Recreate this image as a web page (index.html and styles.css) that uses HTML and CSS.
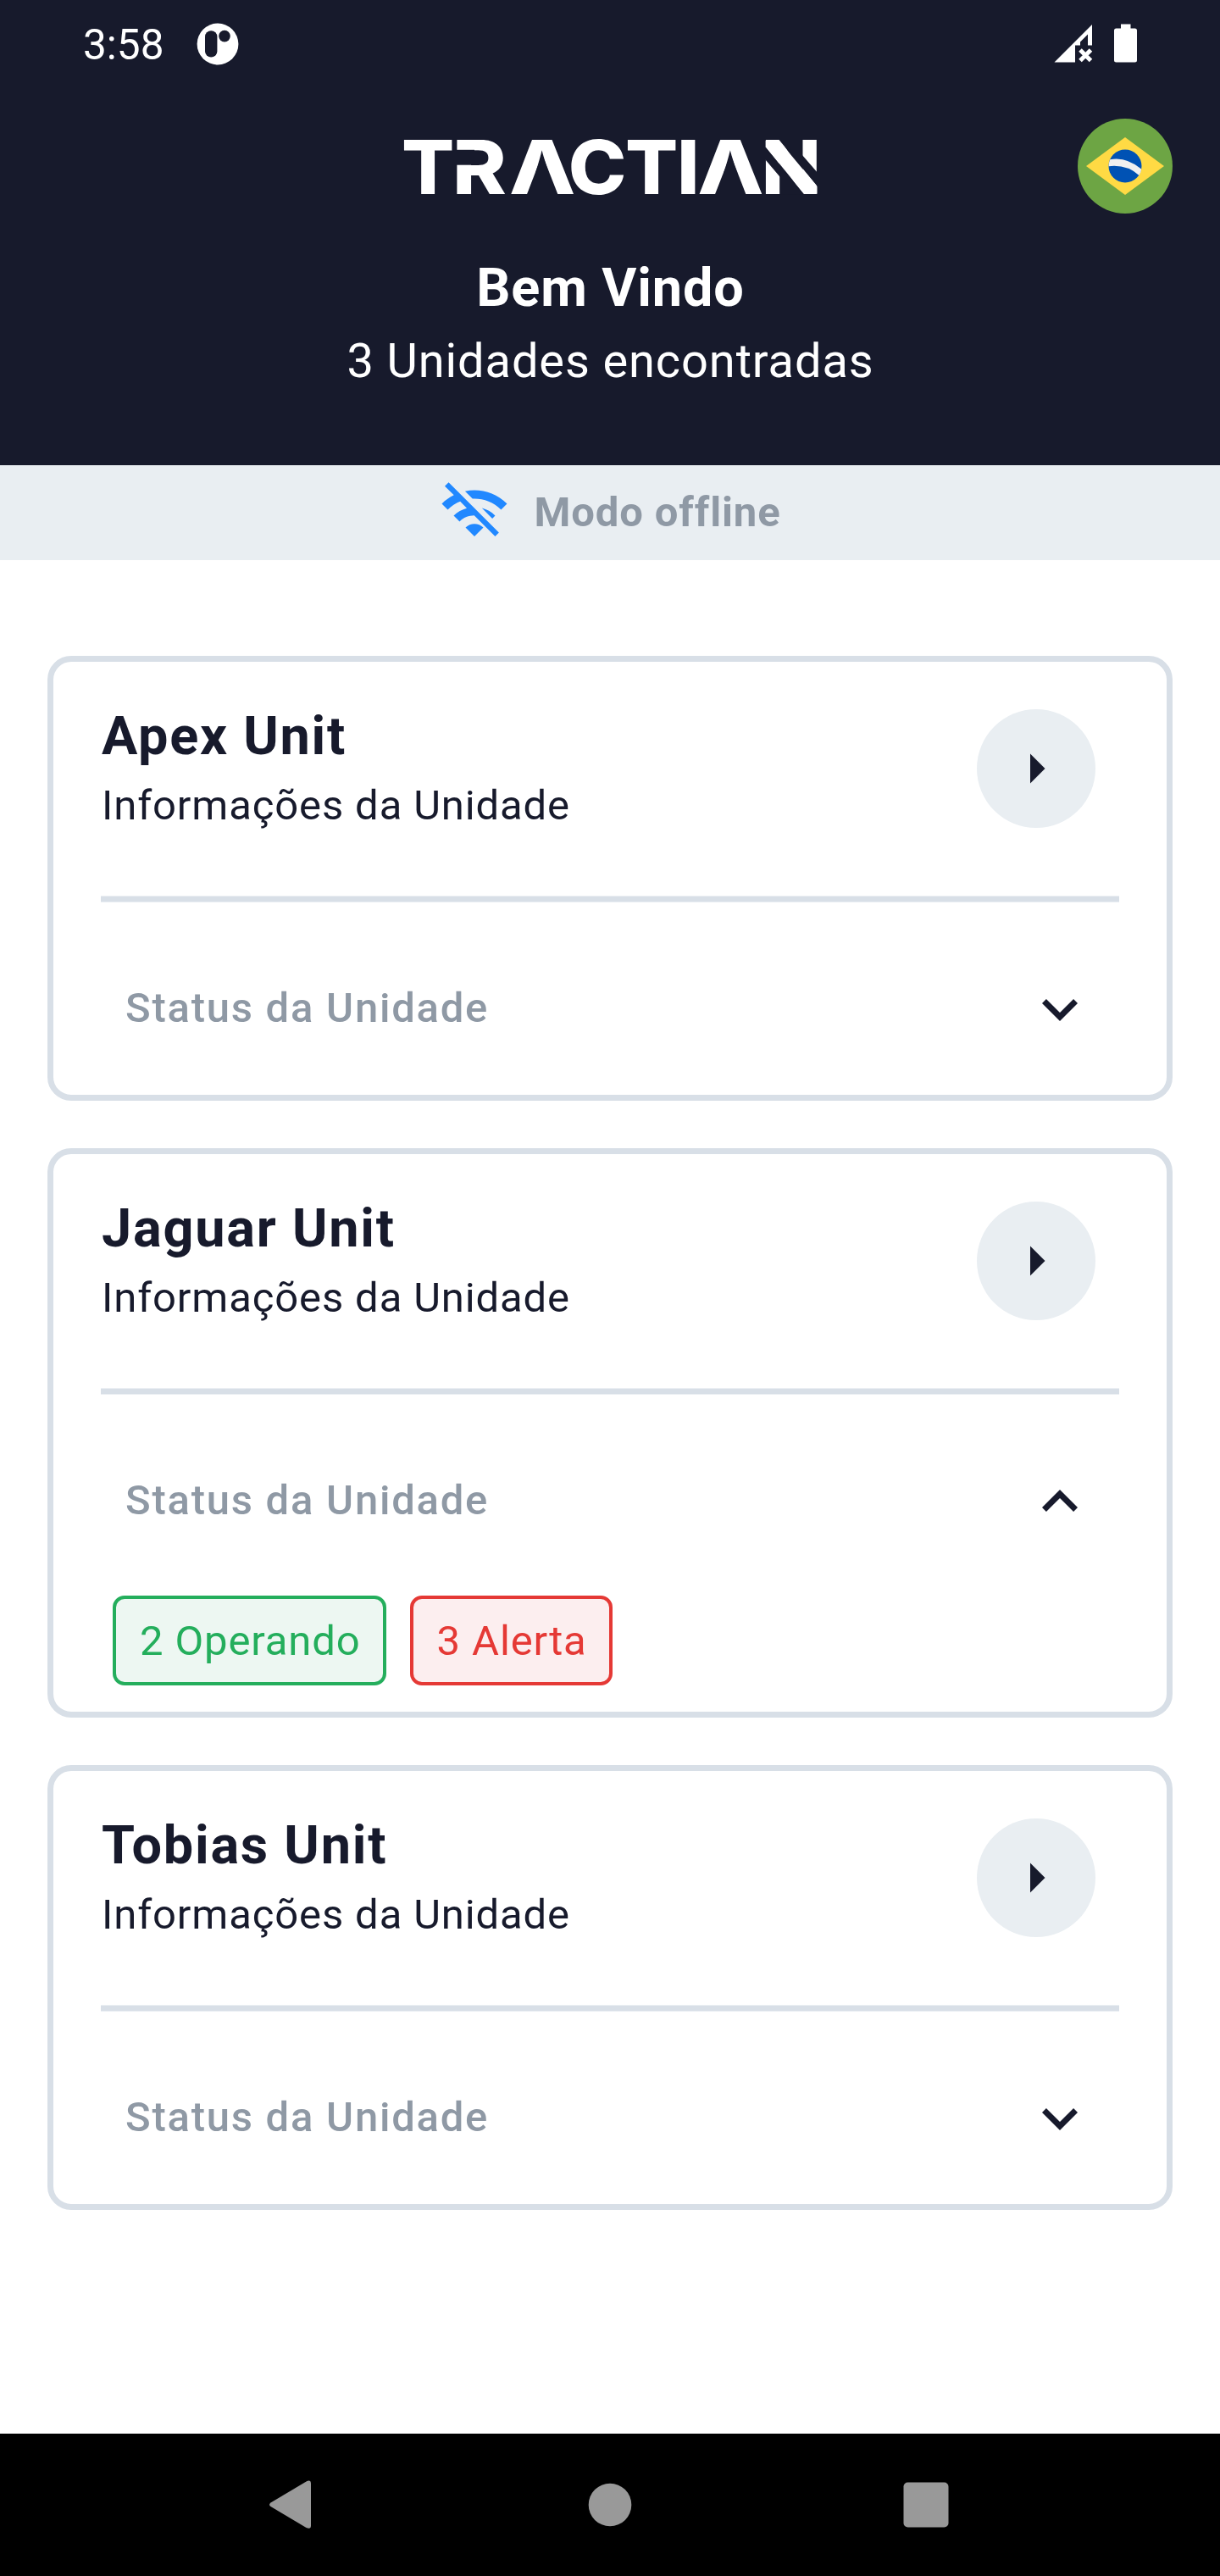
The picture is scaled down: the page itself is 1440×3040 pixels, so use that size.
FILE: index.html
```html
<!DOCTYPE html>
<html lang="pt-BR">
<head>
<meta charset="utf-8">
<title>Tractian</title>
<link rel="stylesheet" href="styles.css">
</head>
<body>
<header class="header">
  <div class="statusbar">
    <div class="status-left">
      <span class="clock">3:58</span>
      <svg class="app-icon" viewBox="0 0 50 50"><circle cx="25" cy="25" r="24.4" fill="#fff"/><rect x="10" y="9.2" width="14.4" height="31.4" rx="7.2" fill="#171a2c"/><circle cx="33" cy="15.6" r="6.8" fill="#171a2c"/></svg>
    </div>
    <div class="status-right">
      <svg class="signal" viewBox="0 0 46 46"><path fill="#fff" d="M45 1V25.500H40V12.500L31 21.500V25.500H25V45.500H.5z"/><path stroke="#fff" stroke-width="5" d="M31 31l12.500 12.500M43.500 31L31 43.500"/></svg>
      <svg class="battery" viewBox="0 0 27 46"><path fill="#fff" d="M8 .500H19.500V5.500H24.500Q27 5.500 27 8V43Q27 45.500 24.500 45.500H2.500Q0 45.500 0 43V8Q0 5.500 2.500 5.500H8z"/></svg>
    </div>
  </div>
  <div class="brand">
    <svg class="logo" viewBox="-8 -20 505 112">
      <text class="wordmark" y="68.700"><tspan x="-2" textLength="62.3" lengthAdjust="spacingAndGlyphs">T</tspan><tspan x="58" textLength="63.8" lengthAdjust="spacingAndGlyphs">R</tspan><tspan x="125" textLength="78.300" lengthAdjust="spacingAndGlyphs">A</tspan><tspan x="194.700" textLength="68.700" lengthAdjust="spacingAndGlyphs">C</tspan><tspan x="262" textLength="62.300" lengthAdjust="spacingAndGlyphs">T</tspan><tspan x="323" textLength="26.600" lengthAdjust="spacingAndGlyphs">I</tspan><tspan x="347.300" textLength="78.300" lengthAdjust="spacingAndGlyphs">A</tspan><tspan x="422.800" textLength="70.200" lengthAdjust="spacingAndGlyphs">N</tspan></text>
      <!-- stencil gaps cut into the wordmark, and the diagonal bar between the last two -->
      <g class="gaps">
        <path d="M61 16.800H84V34.700H61z"/>
        <path d="M164 22.300L182.700 70H145.700z"/>
        <path d="M386.300 22.300L404.700 70H367.700z"/>
        <path d="M426 11.300L473 68.900L445 70V49.300L426 26.700z"/>
        <path d="M442.700 4H470.700V22.700L490 45V61.500z"/>
      </g>
      <path class="bar" d="M429 5H442.700L488.500 60V68.700H473L427.700 13.300V6z"/>
    </svg>
    <svg class="flag" viewBox="0 0 112 112"><circle cx="56" cy="56" r="56" fill="#6da544"/><path d="M56 22l46 34-46 34-46-34z" fill="#ffda44"/><circle cx="56" cy="56" r="19.500" fill="#0052b4"/><path d="M38.200 48.200Q57 44.500 75.200 59.400Q75 63.500 72.500 67Q58 53.800 36.600 56.200Q36.500 52 38.200 48.200z" fill="#f0f0f0"/></svg>
  </div>
  <h1 class="welcome">Bem Vindo</h1>
  <p class="found">3 Unidades encontradas</p>
</header>

<div class="offline">
  <svg class="icon" viewBox="0 0 24 24"><path fill="#2188ff" d="M22.990 9C19.150 5.160 13.800 3.760 8.840 4.780l2.520 2.520c3.470-.17 6.990 1.050 9.630 3.700l2-2zm-4 4c-1.290-1.290-2.840-2.130-4.490-2.560l3.530 3.530.96-.97zM2 3.050L5.070 6.100C3.600 6.820 2.220 7.780 1 9l1.990 2c1.240-1.240 2.670-2.160 4.200-2.770l2.240 2.240C7.810 10.890 6.270 11.730 5 13v.01L6.990 15c1.360-1.360 3.140-2.040 4.920-2.060L18.980 20l1.270-1.260L3.290 1.790 2 3.050zM9 17l3 3 3-3c-1.650-1.660-4.340-1.660-6 0z"/></svg>
  <span>Modo offline</span>
</div>

<main class="units">
  <section class="card">
    <div class="card-head">
      <div class="card-text">
        <h2>Apex Unit</h2>
        <p>Informações da Unidade</p>
      </div>
      <span class="go"><svg class="icon" viewBox="0 0 24 24"><path d="M10 17l5-5-5-5z"/></svg></span>
    </div>
    <div class="divider"></div>
    <div class="status-row">
      <span>Status da Unidade</span>
      <svg class="icon" viewBox="0 0 24 24"><path d="M16.590 8.590L12 13.170 7.410 8.590 6 10l6 6 6-6z"/></svg>
    </div>
  </section>

  <section class="card">
    <div class="card-head">
      <div class="card-text">
        <h2>Jaguar Unit</h2>
        <p>Informações da Unidade</p>
      </div>
      <span class="go"><svg class="icon" viewBox="0 0 24 24"><path d="M10 17l5-5-5-5z"/></svg></span>
    </div>
    <div class="divider"></div>
    <div class="status-row">
      <span>Status da Unidade</span>
      <svg class="icon" viewBox="0 0 24 24"><path d="M12 8l-6 6 1.410 1.410L12 10.830l4.590 4.580L18 14z"/></svg>
    </div>
    <div class="badges">
      <span class="badge ok">2 Operando</span>
      <span class="badge alert">3 Alerta</span>
    </div>
  </section>

  <section class="card">
    <div class="card-head">
      <div class="card-text">
        <h2>Tobias Unit</h2>
        <p>Informações da Unidade</p>
      </div>
      <span class="go"><svg class="icon" viewBox="0 0 24 24"><path d="M10 17l5-5-5-5z"/></svg></span>
    </div>
    <div class="divider"></div>
    <div class="status-row">
      <span>Status da Unidade</span>
      <svg class="icon" viewBox="0 0 24 24"><path d="M16.590 8.590L12 13.170 7.410 8.590 6 10l6 6 6-6z"/></svg>
    </div>
  </section>
</main>

<nav class="navbar">
  <svg viewBox="0 0 60 60"><path d="M6.500 27.500L48.500 2.400Q54 0 54 5V54.500Q54 59.500 48.500 57L6.500 32Q3.500 29.800 6.500 27.500z"/></svg>
  <svg class="home" viewBox="0 0 60 60"><circle cx="30" cy="30" r="25.300"/></svg>
  <svg viewBox="0 0 60 60"><rect x="3.500" y="3.500" width="53" height="53" rx="5"/></svg>
</nav>
</body>
</html>
```
FILE: styles.css
```css
* { box-sizing: border-box; }
body {
  margin: 0;
  width: 1440px;
  height: 3040px;
  display: flex;
  flex-direction: column;
  background: #fff;
  color: #171a2c;
  font-family: Roboto, sans-serif;
  letter-spacing: 0.875px;
}
h1, h2, p { margin: 0; }
svg { display: block; flex: none; }
.icon { width: 84px; height: 84px; fill: #171a2c; }

.header { height: 549px; background: #171a2c; color: #fff; }
.statusbar {
  height: 104px;
  display: flex;
  justify-content: space-between;
  align-items: center;
  padding: 0 98px;
}
.status-left { display: flex; align-items: center; gap: 39px; }
.status-right { display: flex; align-items: center; gap: 25px; padding-bottom: 2px; }
.clock { padding-top: 2px; font-size: 49.5px; line-height: 58px; letter-spacing: 0; }
.app-icon { width: 50px; height: 50px; }
.signal { width: 46px; height: 46px; }
.battery { width: 27px; height: 46px; }

.brand {
  display: grid;
  grid-template-columns: 1fr 505px 1fr;
  align-items: center;
  padding: 36px 56px 0;
  height: 148px;
}
.logo { grid-column: 2; width: 505px; height: 112px; }
.wordmark { font: 800 88px Inter, sans-serif; fill: #fff; letter-spacing: 0; }
.gaps { fill: #171a2c; }
.bar { fill: #fff; }
.flag { width: 112px; height: 112px; justify-self: end; }
.welcome { margin-top: 51px; padding-left: 1px; font-size: 63px; line-height: 74px; font-weight: 700; text-align: center; }
.found { margin-top: 16px; padding-left: 1px; font-size: 56px; line-height: 66px; text-align: center; }

.offline {
  height: 112px;
  display: flex;
  align-items: center;
  justify-content: center;
  gap: 28px;
  background: #e9eef2;
  color: #8f99a5;
  font-size: 49px;
  font-weight: 700;
}
.offline .icon { fill: #2188ff; }
.offline span { padding-bottom: 2px; }

.units { flex: 1; display: flex; flex-direction: column; gap: 56px; padding: 113px 56px 0; }
.card { border: 7px solid #d8dfe7; border-radius: 28px; padding: 56px 56px 59px; }
.card-head { display: flex; justify-content: space-between; padding-right: 28px; height: 140px; }
.card-text { padding-left: 1px; }
h2 { font-size: 63px; line-height: 63px; font-weight: 700; letter-spacing: 1.75px; }
.card-text p { margin-top: 21px; font-size: 49px; line-height: 60px; }
.go {
  width: 140px;
  height: 140px;
  border-radius: 50%;
  display: flex;
  align-items: center;
  justify-content: center;
  background: #e9eef2;
}
.divider {
  height: 8px;
  margin: 80px 0 84px;
  background: #d8dfe7;
  border: solid #ebeff3;
  border-width: 1px 0;
}
.status-row {
  height: 84px;
  display: flex;
  align-items: center;
  justify-content: space-between;
  padding: 0 28px 0 29px;
  color: #8f99a5;
  font-size: 49px;
  font-weight: 500;
  letter-spacing: 1.75px;
}
.status-row span { padding-bottom: 4px; }
.badges { display: flex; gap: 28px; margin: 69px 0 -28px; padding-left: 14px; }
.badge {
  height: 106px;
  padding: 0 26px 0 28px;
  border: 4px solid;
  border-radius: 14px;
  font-size: 49px;
  line-height: 100px;
}
.ok { color: #24ae5c; background: #edf7f2; }
.alert { color: #e53935; background: #fceeef; }

.navbar {
  height: 168px;
  display: flex;
  align-items: center;
  justify-content: space-between;
  padding: 0 317px 0 313px;
  background: #000;
}
.navbar svg { width: 60px; height: 60px; fill: #999; }
.navbar .home { margin-left: 4px; }
```
